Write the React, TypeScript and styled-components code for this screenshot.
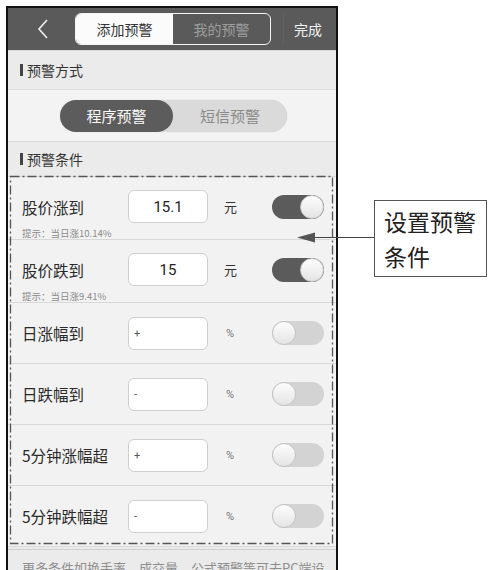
import React from "react";
import styled, { createGlobalStyle } from "styled-components";

const Global = createGlobalStyle`
  html, body { margin: 0; padding: 0; background: #fff; overflow: hidden; }
  body { font-family: "Noto Sans CJK SC", "Noto Sans", sans-serif; }
`;

const Page = styled.div`
  position: relative;
  width: 490px;
  height: 570px;
  padding: 6px 0 0 6px;
  box-sizing: border-box;
`;

const Phone = styled.div`
  width: 332px;
  height: 564px;
  border: 2px solid #111;
  border-bottom: none;
  box-sizing: border-box;
  background: #ebebeb;
  display: flex;
  flex-direction: column;
  overflow: hidden;
`;

const Header = styled.div`
  height: 42px;
  flex: none;
  background: #5a5a5a;
  display: flex;
  align-items: center;
  position: relative;
`;

const Back = styled.div`
  width: 67px;
  display: flex;
  justify-content: center;
  padding-left: 2px;
  box-sizing: border-box;
`;

const TabGroup = styled.div`
  display: flex;
  width: 196px;
  height: 32px;
  border: 1.5px solid #f4f4f4;
  border-radius: 6px;
  box-sizing: border-box;
  overflow: hidden;
`;

const Tab = styled.div<{ $active?: boolean }>`
  flex: 1;
  display: flex;
  align-items: center;
  justify-content: center;
  font-size: 14px;
  background: ${(p) => (p.$active ? "#fbfbfb" : "transparent")};
  color: ${(p) => (p.$active ? "#333" : "#9e9e9e")};
`;

const Sep = styled.div`
  width: 1px;
  height: 30px;
  background: #626262;
  margin-left: 12px;
`;

const Done = styled.div`
  flex: 1;
  text-align: center;
  color: #f2f2f2;
  font-size: 14px;
  padding-right: 4px;
`;

const SectionTitle = styled.div<{ $h: number }>`
  height: ${(p) => p.$h}px;
  flex: none;
  display: flex;
  align-items: center;
  padding-left: 12px;
  font-size: 14px;
  color: #333;
  background: #ebebeb;
  border-top: 1px solid #dadada;
  box-sizing: border-box;
  &::before {
    content: "";
    width: 3px;
    height: 12px;
    background: #444;
    margin-right: 4px;
  }
`;

const ModeArea = styled.div`
  height: 52px;
  flex: none;
  background: #f3f3f3;
  border-top: 1px solid #dedede;
  display: flex;
  align-items: center;
  padding-left: 52px;
  box-sizing: border-box;
`;

const Pill = styled.div`
  width: 227px;
  height: 32px;
  border-radius: 16px;
  background: #dadada;
  display: flex;
  box-shadow: 0 0 1px rgba(0, 0, 0, 0.2);
`;

const PillItem = styled.div<{ $active?: boolean }>`
  width: ${(p) => (p.$active ? "113px" : "114px")};
  border-radius: 16px;
  display: flex;
  align-items: center;
  justify-content: center;
  font-size: 15px;
  background: ${(p) => (p.$active ? "#5c5c5c" : "transparent")};
  color: ${(p) => (p.$active ? "#fafafa" : "#8a8a8a")};
`;

const List = styled.div`
  position: relative;
  flex: none;
  background: #f2f2f2;
  border-top: 1px solid #dadada;
`;

const Row = styled.div<{ $h: number }>`
  height: ${(p) => p.$h}px;
  box-sizing: border-box;
  border-bottom: 1px solid #d8d8d8;
  display: flex;
  flex-direction: column;
  justify-content: ${(p) => (p.$h > 62 ? "flex-start" : "center")};
  padding-top: ${(p) => (p.$h > 62 ? "13px" : "0")};
`;

const Main = styled.div`
  display: flex;
  align-items: center;
  height: 33px;
`;

const Label = styled.div`
  width: 106px;
  padding-left: 14px;
  font-size: 15.5px;
  color: #2a2a2a;
  flex: none;
`;

const Input = styled.div<{ $center?: boolean }>`
  width: 80px;
  height: 33px;
  box-sizing: border-box;
  background: #fff;
  border: 1px solid #cfcfcf;
  border-radius: 6px;
  display: flex;
  align-items: center;
  justify-content: ${(p) => (p.$center ? "center" : "flex-start")};
  padding-left: ${(p) => (p.$center ? "0" : "5px")};
  font-family: Roboto, sans-serif;
  font-size: ${(p) => (p.$center ? "15px" : "11px")};
  color: ${(p) => (p.$center ? "#222" : "#555")};
`;

const Unit = styled.div<{ $pct?: boolean }>`
  width: 64px;
  padding-left: ${(p) => (p.$pct ? "18px" : "16px")};
  box-sizing: border-box;
  font-size: ${(p) => (p.$pct ? "11px" : "13px")};
  color: ${(p) => (p.$pct ? "#777" : "#333")};
  font-family: ${(p) => (p.$pct ? "Roboto, sans-serif" : "inherit")};
`;

const Track = styled.div<{ $on?: boolean }>`
  width: 52px;
  height: 24px;
  border-radius: 12px;
  background: ${(p) => (p.$on ? "#5b5b5b" : "#d3d3d3")};
  display: flex;
  justify-content: ${(p) => (p.$on ? "flex-end" : "flex-start")};
`;

const Knob = styled.div`
  width: 24px;
  height: 24px;
  border-radius: 50%;
  box-sizing: border-box;
  background: linear-gradient(#fdfdfd, #e4e4e4);
  border: 1px solid #c4c4c4;
`;

const Hint = styled.div`
  margin-top: 5px;
  padding-left: 14px;
  font-size: 9.5px;
  line-height: 11px;
  color: #8a8a8a;
`;

const Dashed = styled.svg`
  position: absolute;
  left: 2px;
  top: -1px;
  overflow: visible;
  pointer-events: none;
`;

const Footer = styled.div`
  flex: none;
  border-top: 1px solid #cfcfcf;
  margin-top: 2px;
  padding: 8px 0 0 14px;
  font-size: 13px;
  color: #8e8e8e;
  white-space: nowrap;
`;

const Callout = styled.div`
  position: absolute;
  left: 374px;
  top: 200px;
  width: 113px;
  height: 77px;
  box-sizing: border-box;
  border: 1px solid #555;
  background: #fff;
  padding: 3px 0 0 9px;
  font-size: 23px;
  line-height: 35px;
  color: #222;
`;

const Arrow = styled.svg`
  position: absolute;
  left: 295px;
  top: 230px;
`;

type Item = {
  label: string;
  value: string;
  unit: string;
  on: boolean;
  hint?: string;
};

const items: Item[] = [
  { label: "股价涨到", value: "15.1", unit: "元", on: true, hint: "提示：当日涨10.14%" },
  { label: "股价跌到", value: "15", unit: "元", on: true, hint: "提示：当日涨9.41%" },
  { label: "日涨幅到", value: "+", unit: "%", on: false },
  { label: "日跌幅到", value: "-", unit: "%", on: false },
  { label: "5分钟涨幅超", value: "+", unit: "%", on: false },
  { label: "5分钟跌幅超", value: "-", unit: "%", on: false },
];

export default function App() {
  return (
    <>
      <Global />
      <Page>
        <Phone>
          <Header>
            <Back>
              <svg width="12" height="20" viewBox="0 0 12 20">
                <path d="M10 1 L2 10 L10 19" fill="none" stroke="#f0f0f0" strokeWidth="1.6" />
              </svg>
            </Back>
            <TabGroup>
              <Tab $active>添加预警</Tab>
              <Tab>我的预警</Tab>
            </TabGroup>
            <Sep />
            <Done>完成</Done>
          </Header>
          <SectionTitle $h={39}>预警方式</SectionTitle>
          <ModeArea>
            <Pill>
              <PillItem $active>程序预警</PillItem>
              <PillItem>短信预警</PillItem>
            </Pill>
          </ModeArea>
          <SectionTitle $h={35}>预警条件</SectionTitle>
          <List>
            {items.map((it) => (
              <Row key={it.label} $h={it.hint ? 63 : 61}>
                <Main>
                  <Label>{it.label}</Label>
                  <Input $center={it.unit === "元"}>{it.value}</Input>
                  <Unit $pct={it.unit === "%"}>{it.unit}</Unit>
                  <Track $on={it.on}>
                    <Knob />
                  </Track>
                </Main>
                {it.hint && <Hint>{it.hint}</Hint>}
              </Row>
            ))}
            <Dashed width="323" height="368">
              <rect
                x="0.5"
                y="0.5"
                width="322"
                height="367"
                fill="none"
                stroke="#555"
                strokeWidth="1.3"
                strokeDasharray="9 3 2 3"
              />
            </Dashed>
          </List>
          <Footer>更多条件如换手率、成交量、公式预警等可去PC端设</Footer>
        </Phone>
        <Arrow width="80" height="16" viewBox="0 0 80 16">
          <line x1="14" y1="7.5" x2="80" y2="7.5" stroke="#444" strokeWidth="1.2" />
          <polygon points="2,7.5 20,2.5 20,12.5" fill="#555" />
        </Arrow>
        <Callout>
          设置预警
          <br />
          条件
        </Callout>
      </Page>
    </>
  );
}
